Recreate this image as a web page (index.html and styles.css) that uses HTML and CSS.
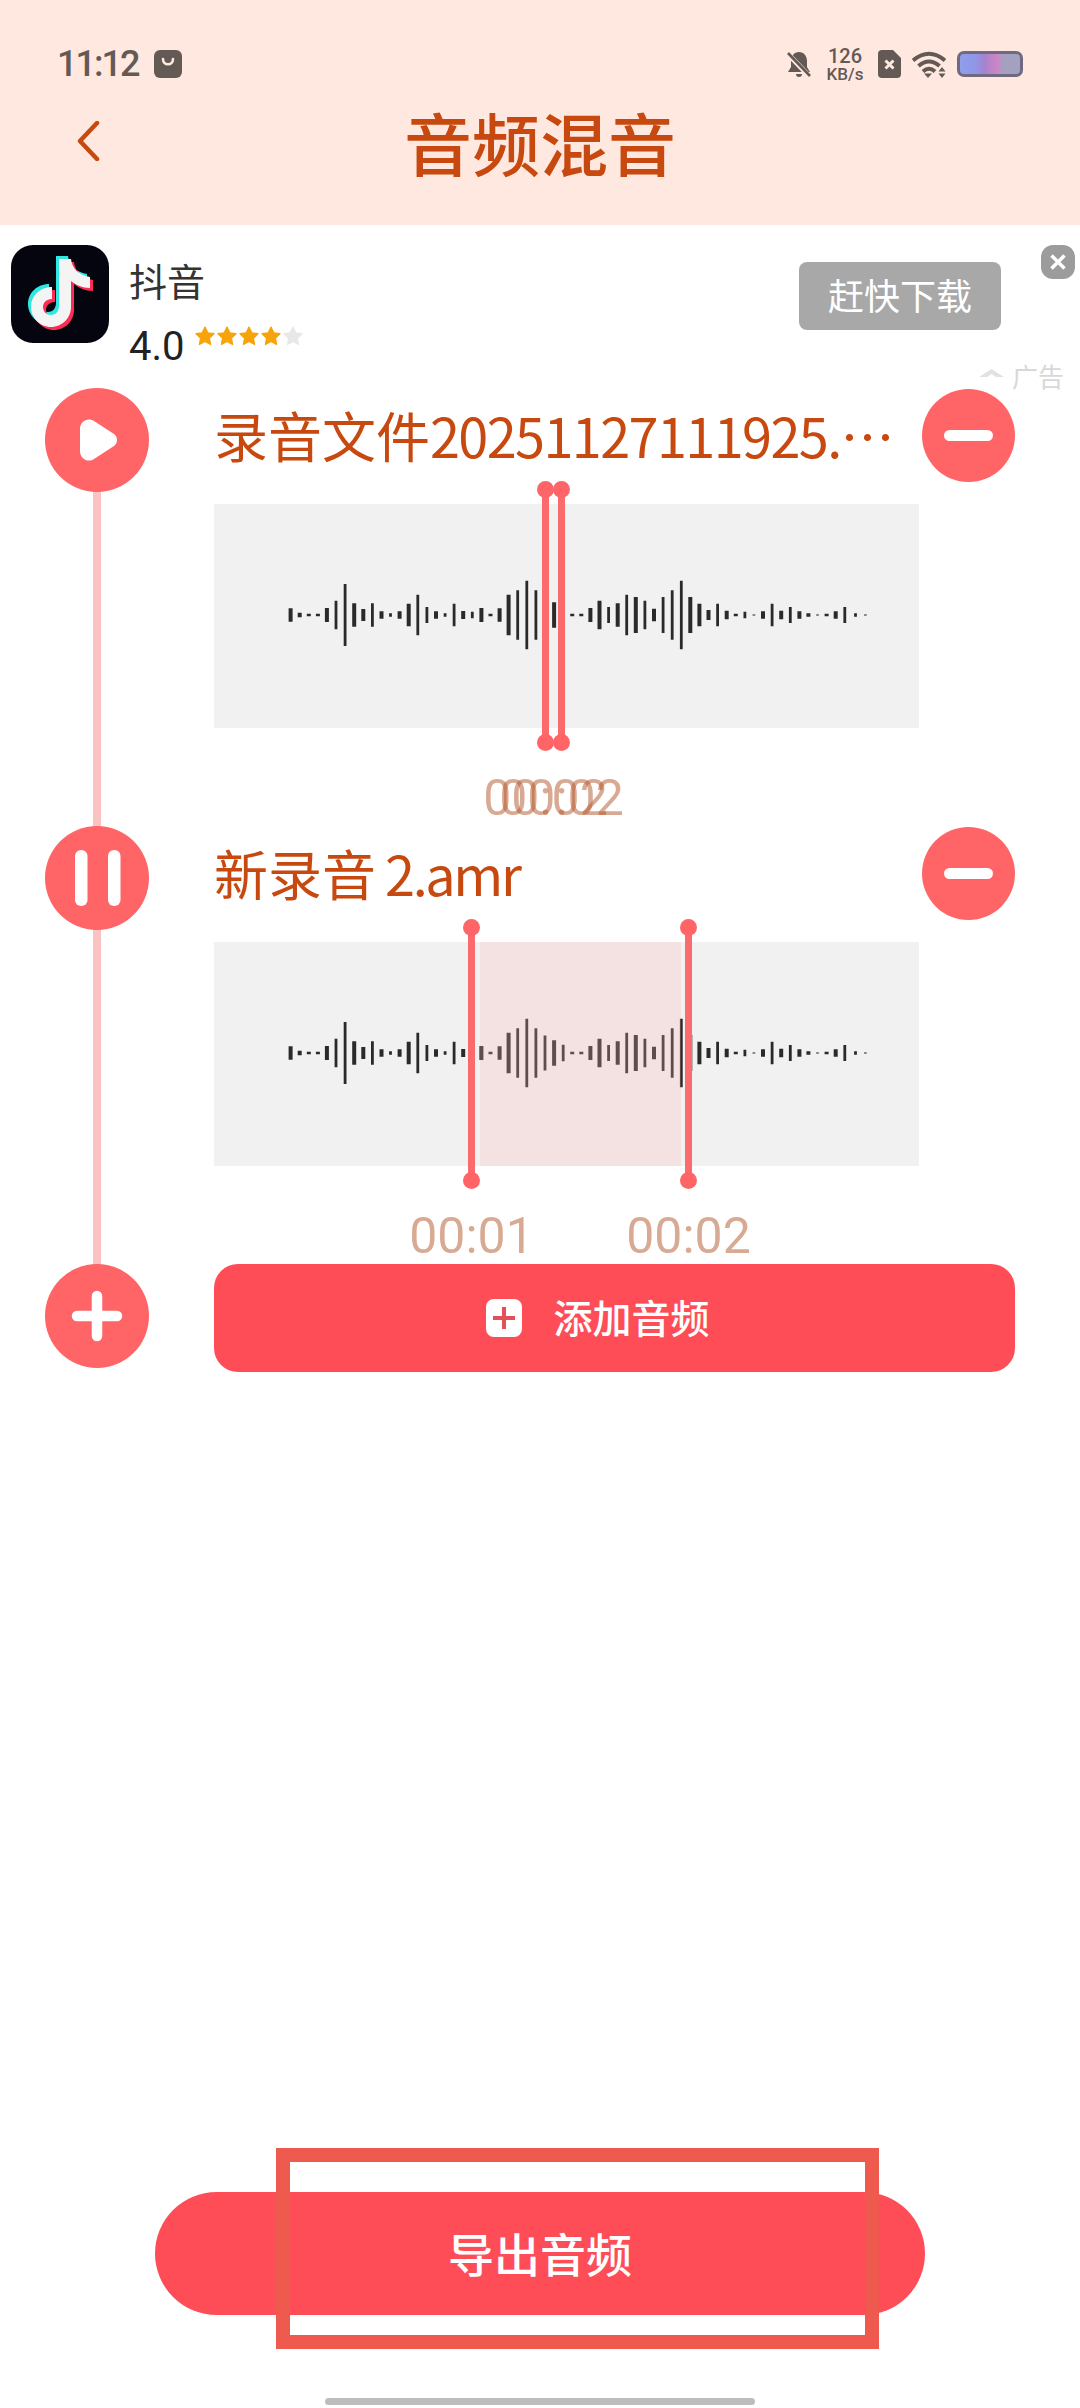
FILE: index.html
```html
<!DOCTYPE html>
<html lang="zh-CN">
<head>
    <meta charset="UTF-8">
    <meta name="viewport" content="width=device-width, initial-scale=1.0">
    <title>音频混音</title>
    <link rel="stylesheet" href="styles.css">
</head>
<body>
    <svg class="defs" width="0" height="0">
        <symbol id="wave" viewBox="0 0 705 224">
            <path class="bar-thick" d="M76.6 104.3v13.4M85.7 108.7v4.6M94.8 109.7v2.6M103.9 109.7v2.6M112.9 104v14M140.2 99.3v23.4M149.3 105v12M167.5 107.3v7.4M185.6 107.3v7.4M194.7 99.7v22.6M222 107.3v7.4M249.2 107v8M267.4 104v14M276.5 109.7v2.6M285.6 104.3v13.4M294.6 90.7v40.6M340.1 98.3v25.4M358.2 109.7v2.600M367.3 109.7v2.6M376.4 104v14M385.5 96.7v28.6M403.7 99.3v23.4M421.8 93v36M440 104.7v12.6M476.3 93v36M485.4 99.7v22.6M494.5 106v10M512.7 106.7v8.6M521.8 109.7v2.6M549 107.3v7.4M567.2 106.7v8.6M585.4 107.3v7.4M594.4 109.3v3.4M612.6 109.7v2.6M621.7 107.3v7.4"/>
            <path class="bar-thin" d="M122 96.7v28.6M131.1 80v62M158.4 99.3v23.4M176.5 109.3v3.4M203.8 90.7v40.6M212.9 103v16M231.1 109.3v3.4M240.1 99.7v22.6M258.3 107.7v6.6M303.7 86.3v49.4M312.8 76.7v68.6M321.9 86.3v49.4M331 93.5v35M349.2 102.7v16.6M394.6 103v16M412.7 90.7v40.6M430.9 96.7v28.6M449.1 93v36M458.2 86.3v49.4M467.3 76.7v68.6M503.6 99.7v22.6M530.9 107.7v6.6M539.9 110.5v1M558.1 99.7v22.6M576.3 103v16M603.500 110.5v1M630.8 103v16M641.5 109.3v3.4M651.4 110.5v1"/>
        </symbol>
    </svg>

    <div class="app">
        <header class="top">
            <div class="status-bar">
                <div class="status-left">
                    <span class="clock">11:12</span>
                    <svg class="bag-icon" viewBox="0 0 28 28"><rect width="28" height="28" rx="6" fill="#645a55"/><path d="M9 9c0 7 10 7 10 0" fill="none" stroke="#ffe8e0" stroke-width="2.6" stroke-linecap="round"/></svg>
                </div>
                <div class="status-right">
                    <svg class="bell-icon" viewBox="0 0 26 27"><path d="M13 1c5 0 8 4 8 9v6l3 5H2l3-5v-6c0-5 3-9 8-9zM10 23h6c0 2-1 3-3 3s-3-1-3-3z" fill="#645a55"/><path d="M2 3l22 23" stroke="#ffe8e0" stroke-width="5"/><path d="M2 2l22 23" stroke="#645a55" stroke-width="2.6"/></svg>
                    <div class="net-speed"><span class="net-num">126</span><span class="net-unit">KB/s</span></div>
                    <svg class="sim-icon" viewBox="0 0 23 28"><path d="M4 0h11l8 8v16a4 4 0 0 1-4 4H4a4 4 0 0 1-4-4V4a4 4 0 0 1 4-4z" fill="#645a55"/><path d="M7.5 10.500l8 8M15.5 10.500l-8 8" stroke="#ffe8e0" stroke-width="3"/></svg>
                    <svg class="wifi-icon" viewBox="0 0 34 27"><g fill="none" stroke="#645a55" stroke-width="4"><path d="M1 9.500Q17-4 33 9.500"/><path d="M6.500 15Q17 6 27.500 15"/><path d="M11 20.500Q17 15 23 20.500"/></g><path d="M12 22.500h8L16 27z" fill="#645a55"/><path d="M30 16l3.500 4.500h-7zM30 27l-3.500-4.500h7z" fill="#645a55"/></svg>
                    <div class="battery"></div>
                </div>
            </div>
            <div class="title-bar">
                <svg class="back-icon" viewBox="0 0 24 40"><path d="M21 2L4 20l17 18" fill="none" stroke="#c8490f" stroke-width="4.500" stroke-linecap="round" stroke-linejoin="round"/></svg>
                <h1 class="title">音频混音</h1>
            </div>
        </header>

        <section class="ad">
            <svg class="ad-logo" viewBox="0 0 98 98">
                <rect width="98" height="98" rx="22" fill="#05050f"/>
                <path transform="translate(-3 -3)" fill="#2fe6e0" d="M48 14H60C61 23 67 30 79 32V43C71 43 65 40 60 36V62C60 73 51 82 40 82C29 82 20 73 20 62C20 51 29 42 41 42V54C35 54 32 58 32 62C32 67 36 70 40 70C45 70 48 66 48 61Z"/>
                <path transform="translate(3 3)" fill="#fb2c55" d="M48 14H60C61 23 67 30 79 32V43C71 43 65 40 60 36V62C60 73 51 82 40 82C29 82 20 73 20 62C20 51 29 42 41 42V54C35 54 32 58 32 62C32 67 36 70 40 70C45 70 48 66 48 61Z"/>
                <path fill="#f4f4f4" d="M48 14H60C61 23 67 30 79 32V43C71 43 65 40 60 36V62C60 73 51 82 40 82C29 82 20 73 20 62C20 51 29 42 41 42V54C35 54 32 58 32 62C32 67 36 70 40 70C45 70 48 66 48 61Z"/>
            </svg>
            <div class="ad-info">
                <div class="ad-name">抖音</div>
                <div class="ad-rating">
                    <span class="ad-score">4.0</span>
                    <svg class="ad-stars" viewBox="0 0 110 20">
                        <g class="star-on">
                            <path d="M10 1l2.800 5.800 6.200.900-4.500 4.400 1.100 6.400L10 15.500l-5.600 3 1.100-6.400L1 7.700l6.200-.900z"/>
                            <path transform="translate(22)" d="M10 1l2.800 5.800 6.200.900-4.500 4.400 1.100 6.400L10 15.500l-5.600 3 1.100-6.400L1 7.700l6.200-.900z"/>
                            <path transform="translate(44)" d="M10 1l2.800 5.800 6.200.900-4.500 4.400 1.100 6.400L10 15.500l-5.600 3 1.100-6.400L1 7.700l6.200-.900z"/>
                            <path transform="translate(66)" d="M10 1l2.800 5.800 6.200.900-4.500 4.400 1.100 6.400L10 15.500l-5.600 3 1.100-6.400L1 7.700l6.200-.900z"/>
                        </g>
                        <path class="star-off" transform="translate(88)" d="M10 1l2.800 5.800 6.200.900-4.500 4.400 1.100 6.400L10 15.500l-5.600 3 1.100-6.400L1 7.700l6.200-.900z"/>
                    </svg>
                </div>
            </div>
            <button class="ad-btn">赶快下载</button>
            <div class="ad-side">
                <svg class="ad-close" viewBox="0 0 34 34"><rect width="34" height="34" rx="12" fill="#9c9c9c"/><path d="M10.500 10.500l13 13M23.500 10.500l-13 13" stroke="#fff" stroke-width="3.500"/></svg>
                <div class="ad-tag">
                    <svg class="ad-tag-icon" viewBox="0 0 25 9"><path d="M12.500 0L25 8h-8l-4.500-3L8 8H0z" fill="#e2e2e2"/></svg>
                    <span>广告</span>
                </div>
            </div>
        </section>

        <main class="tracks">
            <div class="connector"></div>

            <div class="track">
                <button class="round-btn">
                    <svg viewBox="0 0 104 104"><path d="M35 41c0-8 8-12 14-8l20 13c4 3 4 9 0 12L49 71c-6 4-14 0-14-8z" fill="#fff"/></svg>
                </button>
                <div class="track-main">
                    <div class="track-head">
                        <div class="track-name">录音文件<span class="digits">20251127111925.</span>…</div>
                        <button class="minus-btn"></button>
                    </div>
                    <div class="wave-box">
                        <svg class="wave" width="705" height="224"><use href="#wave"/></svg>
                        <div class="handle" style="left: 328px"><span class="time">00:02</span></div>
                        <div class="handle" style="left: 344px"><span class="time">00:02</span></div>
                    </div>
                </div>
            </div>

            <div class="track">
                <button class="round-btn">
                    <svg viewBox="0 0 104 104"><rect x="30" y="24" width="12.500" height="56" rx="6" fill="#fff"/><rect x="63" y="24" width="12.500" height="56" rx="6" fill="#fff"/></svg>
                </button>
                <div class="track-main">
                    <div class="track-head">
                        <div class="track-name">新录音 <span class="ext">2.amr</span></div>
                        <button class="minus-btn"></button>
                    </div>
                    <div class="wave-box">
                        <svg class="wave" width="705" height="224"><use href="#wave"/></svg>
                        <div class="selection" style="left: 266px; width: 201px"></div>
                        <div class="handle" style="left: 254px"><span class="time">00:01</span></div>
                        <div class="handle" style="left: 471px"><span class="time">00:02</span></div>
                    </div>
                </div>
            </div>

            <div class="add-row">
                <button class="round-btn">
                    <svg viewBox="0 0 104 104"><path d="M52 32v40M32 52h40" stroke="#fff" stroke-width="10.500" stroke-linecap="round"/></svg>
                </button>
                <button class="add-btn">
                    <svg class="add-icon" viewBox="0 0 36 38"><rect width="36" height="38" rx="8" fill="#fff"/><path d="M18 8v22M7 19h22" stroke="#e2505a" stroke-width="4"/></svg>
                    <span class="add-label">添加音频</span>
                </button>
            </div>
        </main>

        <div class="export-wrap">
            <button class="export-btn">导出音频</button>
            <div class="export-mark"></div>
        </div>

        <div class="home-bar"></div>
    </div>
</body>
</html>
```

FILE: styles.css
```css
:root {
    --accent: #ff4d58;
    --soft-red: #ff6466;
    --title: #c8490f;
    --cjk: "Noto Sans CJK SC", "Noto Sans", Roboto, sans-serif;
}

* {
    box-sizing: border-box;
}

body {
    margin: 0;
    background: #fff;
    font-family: var(--cjk);
}

button {
    border: none;
    padding: 0;
    font-family: inherit;
}

.defs {
    position: absolute;
}

.bar-thick {
    stroke: #2a2a2a;
    stroke-width: 4;
    fill: none;
}

.bar-thin {
    stroke: #2a2a2a;
    stroke-width: 2.8;
    fill: none;
}

.app {
    display: flex;
    flex-direction: column;
    width: 1080px;
    height: 2408px;
    padding-bottom: 3px;
    overflow: hidden;
}

/* header */
.top {
    flex: none;
    height: 225px;
    padding: 48px 57px 0;
    background: #ffe8e0;
}

.status-bar {
    display: flex;
    justify-content: space-between;
    align-items: center;
    height: 32px;
}

.status-left {
    display: flex;
    align-items: center;
    gap: 16px;
}

.clock {
    font-family: Roboto, sans-serif;
    font-size: 36px;
    font-weight: 500;
    line-height: 32px;
    letter-spacing: -2px;
    color: #645a55;
}

.bag-icon {
    width: 28px;
    height: 28px;
}

.status-right {
    display: flex;
    align-items: center;
}

.bell-icon {
    width: 26px;
    height: 27px;
    margin-right: 14px;
}

.net-speed {
    display: flex;
    flex-direction: column;
    align-items: center;
    width: 38px;
    margin-right: 14px;
    font-family: Roboto, sans-serif;
    font-weight: 500;
    color: #645a55;
}

.net-num {
    font-size: 20px;
    line-height: 20px;
}

.net-unit {
    font-size: 17px;
    line-height: 17px;
}

.sim-icon {
    width: 23px;
    height: 28px;
    margin-right: 11px;
}

.wifi-icon {
    width: 34px;
    height: 27px;
    margin-right: 11px;
}

.battery {
    width: 66px;
    height: 26px;
    border: 3px solid #6f6a80;
    border-radius: 7px;
    background: linear-gradient(90deg, #8f9fe8 0%, #8f96e8 25%, #a484cf 40%, #cf84c6 62%, #a3a0c0 72%, #a3a0c0 100%);
}

.title-bar {
    position: relative;
    display: flex;
    justify-content: center;
    align-items: center;
    height: 92px;
    margin-top: 16px;
}

.back-icon {
    position: absolute;
    left: 19px;
    top: 25px;
    width: 24px;
    height: 40px;
}

.title {
    margin: 0;
    font-size: 68px;
    font-weight: 500;
    line-height: 92px;
    color: var(--title);
}

/* ad */
.ad {
    flex: none;
    display: flex;
    height: 163px;
    padding: 20px 5px 0 11px;
}

.ad-logo {
    flex: none;
    width: 98px;
    height: 98px;
}

.ad-info {
    flex: none;
    width: 690px;
    padding: 13px 0 0 20px;
}

.ad-name {
    font-size: 38px;
    line-height: 44px;
    color: #333;
}

.ad-rating {
    display: flex;
    align-items: flex-start;
    margin-top: 23px;
}

.ad-score {
    font-family: Roboto, sans-serif;
    font-size: 40px;
    line-height: 44px;
    color: #222;
}

.ad-stars {
    width: 110px;
    height: 20px;
    margin: 1px 0 0 10px;
}

.star-on path {
    fill: #f7a30a;
    stroke: #f7a30a;
    stroke-width: 1.2;
    stroke-linejoin: round;
}

.star-off {
    fill: #e8e8e8;
    stroke: #e8e8e8;
    stroke-width: 1.2;
    stroke-linejoin: round;
}

.ad-btn {
    flex: none;
    width: 202px;
    height: 68px;
    margin-top: 17px;
    padding-bottom: 4px;
    border-radius: 8px;
    background: #a8a8a8;
    font-size: 36px;
    color: #fff;
}

.ad-side {
    display: flex;
    flex-direction: column;
    align-items: flex-end;
    flex: 1;
    min-width: 0;
}

.ad-close {
    flex: none;
    width: 34px;
    height: 34px;
}

.ad-tag {
    display: flex;
    flex: none;
    align-items: center;
    gap: 8px;
    margin-top: 82px;
    margin-right: 11px;
    font-size: 26px;
    line-height: 30px;
    color: #d8d8d8;
    white-space: nowrap;
}

.ad-tag-icon {
    flex: none;
    width: 25px;
    height: 9px;
    margin-bottom: 6px;
}

/* tracks */
.tracks {
    position: relative;
    padding-left: 45px;
}

.connector {
    position: absolute;
    left: 93px;
    top: 52px;
    width: 8px;
    height: 876px;
    background: #fbc2c2;
}

.track {
    position: relative;
    display: flex;
    height: 438px;
}

.round-btn {
    position: relative;
    flex: none;
    width: 104px;
    height: 104px;
    margin-right: 65px;
    border-radius: 50%;
    background: var(--soft-red);
}

.round-btn svg {
    display: block;
    width: 104px;
    height: 104px;
}

.track-main {
    width: 801px;
}

.track-head {
    display: flex;
    justify-content: space-between;
    align-items: center;
    height: 94px;
}

.track-name {
    font-size: 54px;
    line-height: 76px;
    word-spacing: -3px;
    color: var(--title);
    white-space: nowrap;
}

.digits {
    letter-spacing: -1.6px;
}

.ext {
    letter-spacing: -2.4px;
}

.minus-btn {
    position: relative;
    flex: none;
    width: 93px;
    height: 93px;
    border-radius: 50%;
    background: var(--soft-red);
}

.minus-btn::after {
    content: "";
    position: absolute;
    left: 22px;
    top: 41px;
    width: 49px;
    height: 11px;
    border-radius: 6px;
    background: #fff;
}

.wave-box {
    position: relative;
    width: 705px;
    height: 224px;
    margin-top: 22px;
    background: #f1f1f1;
}

.wave {
    display: block;
}

.selection {
    position: absolute;
    top: 0;
    bottom: 0;
    background: rgba(255, 178, 178, 0.25);
}

.handle {
    position: absolute;
    top: -15px;
    width: 7px;
    height: 254px;
    background: #fb6a6c;
}

.handle::before,
.handle::after {
    content: "";
    position: absolute;
    left: -5px;
    width: 17px;
    height: 17px;
    border-radius: 50%;
    background: var(--soft-red);
}

.handle::before {
    top: -8px;
}

.handle::after {
    bottom: -8px;
}

.time {
    position: absolute;
    top: 285px;
    left: 50%;
    transform: translateX(-50%);
    font-family: Roboto, sans-serif;
    font-size: 50px;
    line-height: 48px;
    color: rgba(180, 85, 40, 0.5);
}

/* add row */
.add-row {
    display: flex;
}

.add-btn {
    display: flex;
    justify-content: center;
    align-items: center;
    gap: 31px;
    width: 801px;
    height: 108px;
    padding-right: 33px;
    border-radius: 24px;
    background: var(--accent);
    font-size: 39px;
    font-weight: 500;
    color: #fff;
}

.add-icon {
    width: 36px;
    height: 38px;
}

.add-label {
    margin-bottom: 4px;
}

/* bottom */
.export-wrap {
    position: relative;
    flex: none;
    width: 770px;
    margin: auto auto 0;
}

.export-btn {
    display: block;
    width: 770px;
    height: 123px;
    padding-bottom: 4px;
    border-radius: 62px;
    background: var(--accent);
    font-size: 46px;
    font-weight: 500;
    color: #fff;
}

.export-mark {
    position: absolute;
    left: 121px;
    top: -44px;
    width: 603px;
    height: 201px;
    border: 14px solid #ee5a4e;
}

.home-bar {
    flex: none;
    align-self: center;
    width: 430px;
    height: 7px;
    margin-top: 83px;
    border-radius: 4px;
    background: #bdbdbd;
}
```
